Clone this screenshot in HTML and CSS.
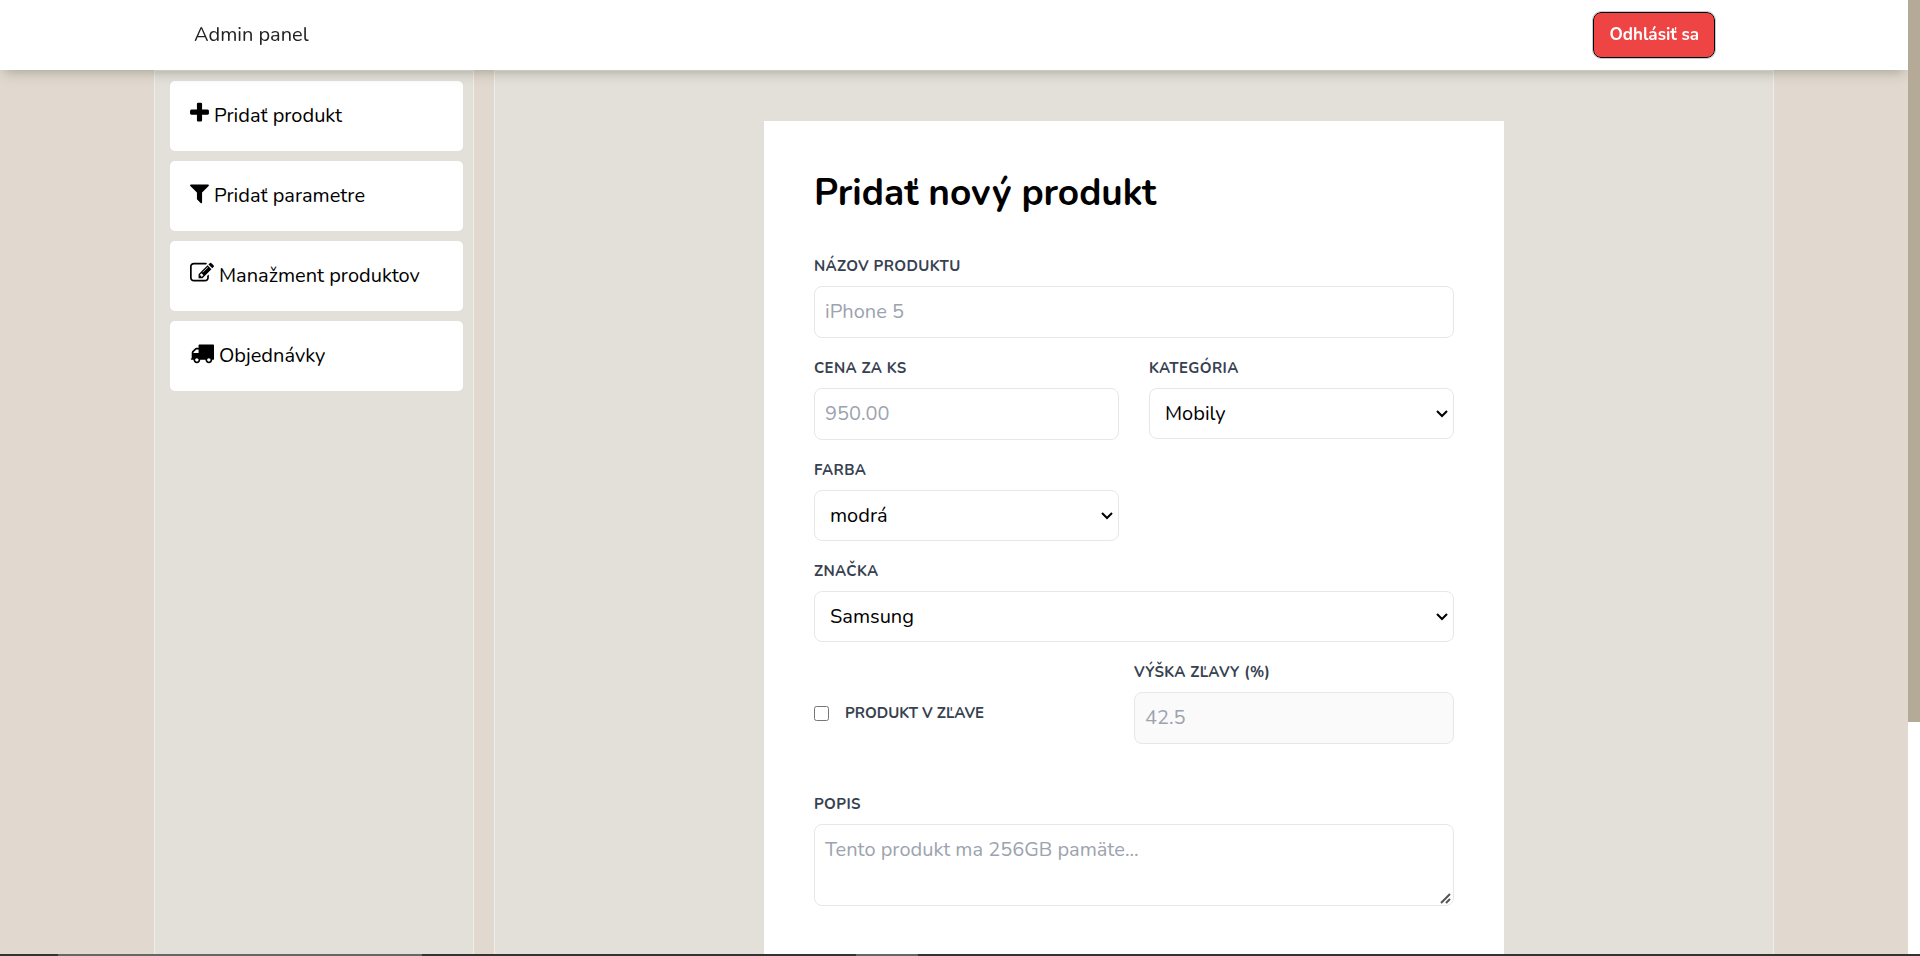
FILE: index.html
```html
<!DOCTYPE html>
<html lang="sk">
<head>
  <meta charset="utf-8">
  <meta name="viewport" content="width=device-width, initial-scale=1">
  <title>Admin panel</title>
  <link rel="stylesheet" href="styles.css">
</head>
<body>
  <div class="shell">
    <div class="page">
      <header class="topbar">
        <a class="brand" href="#">Admin panel</a>
        <button class="logout" type="button">Odhlásiť sa</button>
      </header>
      <div class="columns">
        <nav class="sidebar">
          <a class="nav-card" href="#">
            <svg class="icon icon-narrow" viewBox="192 0 1408 1792" aria-hidden="true"><path d="M1600 736v192q0 40-28 68t-68 28h-416v416q0 40-28 68t-68 28h-192q-40 0-68-28t-28-68v-416h-416q-40 0-68-28t-28-68v-192q0-40 28-68t68-28h416v-416q0-40 28-68t68-28h192q40 0 68 28t28 68v416h416q40 0 68 28t28 68z"/></svg>
            <span>Pridať produkt</span>
          </a>
          <a class="nav-card" href="#">
            <svg class="icon icon-narrow" viewBox="192 0 1408 1792" aria-hidden="true"><path d="M1595 295q17 41-14 70l-493 493v742q0 42-39 59-13 5-25 5-27 0-45-19l-256-256q-19-19-19-45v-486l-493-493q-31-29-14-70 17-39 59-39h1280q42 0 59 39z"/></svg>
            <span>Pridať parametre</span>
          </a>
          <a class="nav-card" href="#">
            <svg class="icon" viewBox="0 0 1792 1792" aria-hidden="true"><path d="M888 1184l116-116-152-152-116 116v56h96v96h56zm440-720q-16-16-33 1l-350 350q-17 17-1 33t33-1l350-350q17-17 1-33zm80 594v190q0 119-84.5 203.5t-203.5 84.5h-832q-119 0-203.5-84.5t-84.5-203.5v-832q0-119 84.5-203.5t203.5-84.5h832q63 0 117 25 15 7 18 23 3 17-9 29l-49 49q-14 14-32 8-23-6-45-6h-832q-66 0-113 47t-47 113v832q0 66 47 113t113 47h832q66 0 113-47t47-113v-126q0-13 9-22l64-64q15-15 35-7t20 29zm-96-738l288 288-672 672h-288v-288zm444 132l-92 92-288-288 92-92q28-28 68-28t68 28l152 152q28 28 28 68t-28 68z"/></svg>
            <span>Manažment produktov</span>
          </a>
          <a class="nav-card" href="#">
            <svg class="icon" viewBox="0 0 1792 1792" aria-hidden="true"><path d="M640 1408q0-52-38-90t-90-38-90 38-38 90 38 90 90 38 90-38 38-90zm-384-512h384v-256h-158q-13 0-22 9l-195 195q-9 9-9 22v30zm1280 512q0-52-38-90t-90-38-90 38-38 90 38 90 90 38 90-38 38-90zm256-1088v1024q0 15-4 26.5t-13.5 18.5-16.5 11.5-23.5 6-22.5 2-25.5 0-22.5-.5q0 106-75 181t-181 75-181-75-75-181h-384q0 106-75 181t-181 75-181-75-75-181h-64q-3 0-22.5.5t-25.5 0-22.5-2-23.5-6-16.5-11.5-13.5-18.5-4-26.5q0-26 19-45t45-19v-320q0-8-.5-35t0-38 2.5-34.5 6.5-37 14-30.5 22.5-30l198-198q19-19 50.5-32t58.5-13h160v-192q0-26 19-45t45-19h1024q26 0 45 19t19 45z"/></svg>
            <span>Objednávky</span>
          </a>
        </nav>
        <main class="content">
          <form class="product-form">
            <h1 class="title">Pridať nový produkt</h1>
            <div class="field">
              <label class="label" for="name">Názov produktu</label>
              <input class="control" id="name" type="text" placeholder="iPhone 5">
            </div>
            <div class="pair">
              <div class="field">
                <label class="label" for="price">Cena za ks</label>
                <input class="control" id="price" type="text" placeholder="950.00">
              </div>
              <div class="field">
                <label class="label" for="category">Kategória</label>
                <select class="control select" id="category"><option>Mobily</option></select>
              </div>
            </div>
            <div class="pair">
              <div class="field">
                <label class="label" for="color">Farba</label>
                <select class="control select" id="color"><option>modrá</option></select>
              </div>
            </div>
            <div class="field">
              <label class="label" for="brand">Značka</label>
              <select class="control select" id="brand"><option>Samsung</option></select>
            </div>
            <div class="sale">
              <div class="check">
                <input class="checkbox" id="sale" type="checkbox">
                <label class="label label-check" for="sale">Produkt v zľave</label>
              </div>
              <div class="field">
                <label class="label" for="discount">Výška zľavy (%)</label>
                <input class="control" id="discount" type="text" placeholder="42.5" disabled>
              </div>
            </div>
            <div class="field">
              <label class="label" for="description">Popis</label>
              <textarea class="control area" id="description" placeholder="Tento produkt ma 256GB pamäte..."></textarea>
            </div>
          </form>
        </main>
      </div>
    </div>
    <div class="track"><div class="thumb"></div></div>
    <div class="edge"></div>
  </div>
</body>
</html>
```

FILE: styles.css
```css
* {
  box-sizing: border-box;
}

body {
  margin: 0;
  background: #e1d9cf;
  color: #000;
  font: 400 20px/30px Nunito, Lato, sans-serif;
}

.shell {
  display: grid;
  grid-template: minmax(0, 1fr) 2px / minmax(0, 1fr) 12px;
  height: 100vh;
}

.page {
  display: flex;
  flex-direction: column;
  overflow: hidden auto;
  scrollbar-width: none;
}

.topbar {
  position: sticky;
  top: 0;
  z-index: 1;
  display: flex;
  flex: none;
  align-items: center;
  justify-content: space-between;
  height: 70px;
  padding: 0 193px 0 194px;
  background: #fff;
  box-shadow: 0 6px 12px -4px rgba(60, 60, 40, 0.35);
}

.brand {
  color: #222;
  text-decoration: none;
}

.logout {
  height: 46px;
  padding: 0 15px;
  border: 1px solid #000;
  border-radius: 8px;
  outline: 1px solid #c5cad3;
  background: #ef4444;
  color: #fff;
  font: 700 17px/24px Nunito, Lato, sans-serif;
}

.columns {
  display: grid;
  flex: 1 0 auto;
  grid-template-columns: minmax(0, 1fr) minmax(0, 4fr);
  gap: 20px;
  padding: 0 134px 0 154px;
}

.sidebar,
.content {
  border: 1px solid #f0eee9;
  border-bottom: 0;
  background: #e2e0d9;
}

.sidebar {
  display: flex;
  flex-direction: column;
  gap: 10px;
  padding: 10px 10px 10px 15px;
}

.nav-card {
  display: flex;
  align-items: center;
  gap: 5px;
  height: 70px;
  padding: 0 20px;
  border-radius: 5px;
  background: #fff;
  color: #000;
  text-decoration: none;
}

.icon {
  width: 24px;
  height: 24px;
  margin-bottom: 6px;
}

.icon-narrow {
  width: 19px;
}

.content {
  display: flex;
  align-items: flex-start;
  justify-content: center;
  padding: 50px 20px;
}

.product-form {
  display: flex;
  flex-direction: column;
  gap: 20px;
  width: 740px;
  max-width: 100%;
  padding: 50px;
  background: #fff;
}

.title {
  margin: 0 0 20px;
  font-size: 37px;
  font-weight: 700;
  line-height: 45px;
}

.field {
  display: flex;
  flex-direction: column;
  gap: 10px;
}

.label {
  color: #374151;
  font-size: 15px;
  font-weight: 700;
  letter-spacing: 0.025em;
  line-height: 20px;
  text-transform: uppercase;
}

.label-check {
  letter-spacing: normal;
}

.control {
  width: 100%;
  height: 52px;
  margin: 0;
  padding: 9px 10px 11px;
  border: 1px solid #e5e7eb;
  border-radius: 8px;
  background: #fff;
  color: #000;
  font: inherit;
}

.control::placeholder {
  color: #9ca3af;
  opacity: 1;
}

.control:disabled {
  background: #fafafa;
}

.select {
  height: 51px;
  padding: 0 30px 0 15px;
  appearance: none;
  background: #fff url("data:image/svg+xml,%3Csvg xmlns='http://www.w3.org/2000/svg' width='12' height='8' fill='none' stroke='%23000' stroke-width='2'%3E%3Cpath d='M1 1l5 5 5-5'/%3E%3C/svg%3E") no-repeat right 5px center;
}

.area {
  height: 82px;
  padding: 10px;
}

.area::-webkit-resizer {
  background: url("data:image/svg+xml,%3Csvg xmlns='http://www.w3.org/2000/svg' width='15' height='15' fill='none' stroke='%23555' stroke-width='2'%3E%3Cpath d='M3 13l9-9M8 13l4-4'/%3E%3C/svg%3E") no-repeat right bottom;
}

.pair,
.sale {
  display: grid;
  grid-template-columns: repeat(2, minmax(0, 1fr));
  column-gap: 30px;
}

.sale {
  column-gap: 0;
  margin-bottom: 30px;
}

.check {
  display: flex;
  align-items: center;
  gap: 16px;
  padding-top: 20px;
}

.checkbox {
  width: 15px;
  height: 15px;
  margin: 0;
}

.track {
  background: #fff;
}

.thumb {
  height: 75.7%;
  background: #b5aa97;
}

.edge {
  grid-column: 1 / -1;
  background: linear-gradient(90deg, #333 3%, #666 3% 22%, #333 22% 44.6%, #666 44.6% 47.8%, #333 47.8%);
}
```
